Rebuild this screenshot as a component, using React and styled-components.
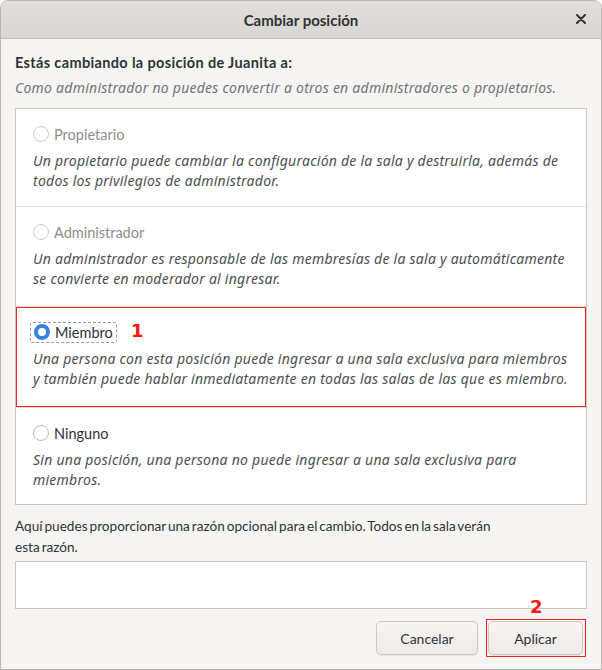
import React from "react";
import styled, { createGlobalStyle } from "styled-components";

const Global = createGlobalStyle`
  html, body { margin: 0; padding: 0; background: #ffffff; }
  body { font-family: "Lato", "Noto Sans", sans-serif; }
  * { box-sizing: border-box; }
`;

const Window = styled.div`
  width: 602px;
  height: 670px;
  background: #f6f5f4;
  border: 1px solid #b9b6b2;
  border-top-left-radius: 8px;
  border-top-right-radius: 8px;
  overflow: hidden;
  display: flex;
  flex-direction: column;
  color: #2e3436;
  font-size: 14.5px;
`;

const HeaderBar = styled.div`
  height: 38px;
  flex: none;
  display: flex;
  align-items: center;
  justify-content: center;
  position: relative;
  background: linear-gradient(#e1dedb, #dad6d2);
  border-bottom: 1px solid #c0bbb6;
`;

const Title = styled.div`
  font-weight: bold;
  font-size: 15px;
  color: #2e3436;
`;

const CloseButton = styled.div`
  position: absolute;
  right: 14px;
  top: 12px;
  width: 12px;
  height: 12px;
  display: flex;
  align-items: center;
  justify-content: center;
`;

const Body = styled.div`
  flex: 1;
  display: flex;
  flex-direction: column;
  padding: 14px 14px 0 14px;
`;

const Heading = styled.div`
  font-weight: bold;
  line-height: 20px;
  letter-spacing: 0.35px;
`;

const Italic = styled.div`
  font-family: "Noto Sans", sans-serif;
  font-style: italic;
  font-size: 14px;
  letter-spacing: 0.25px;
  line-height: 20px;
`;

const Subtitle = styled(Italic)`
  color: #717476;
  margin-top: 5px;
`;

const List = styled.div`
  margin-top: 10px;
  background: #ffffff;
  border: 1px solid #cdc7c2;
  display: flex;
  flex-direction: column;
`;

const Row = styled.div`
  position: relative;
  padding: 14px 11px 14px 17px;
  border-bottom: ${(p) => (p.$last ? "none" : "1px solid #e4e1de")};
  height: ${(p) => p.$h}px;
`;

const Marked = styled.div`
  position: absolute;
  inset: 0;
  border: 1px solid #ff2020;
  pointer-events: none;
`;

const RadioLine = styled.div`
  display: flex;
  align-items: center;
  gap: 5px;
  height: 22px;
  color: ${(p) => (p.$disabled ? "#8b8e8f" : "#2e3436")};
`;

const Focus = styled.div`
  display: flex;
  align-items: center;
  gap: 5px;
  margin-left: -3px;
  padding: 1px 3px;
  border: 1px dashed #9a9a9a;
  border-radius: 3px;
`;

const Radio = styled.span`
  width: 16px;
  height: 16px;
  border-radius: 50%;
  flex: none;
  border: ${(p) =>
    p.$checked ? "4px solid #3584e4" : `1px solid ${p.$disabled ? "#cfcac5" : "#c0bab4"}`};
  background: #ffffff;
`;

const Desc = styled(Italic)`
  color: #4d5052;
  margin-top: 6px;
`;

const Badge = styled.span`
  position: absolute;
  color: #ff1414;
  font-weight: bold;
  font-size: 18px;
  font-family: "DejaVu Sans", sans-serif;
`;

const Reason = styled.div`
  margin-top: 11px;
  max-width: 490px;
  line-height: 21px;
  font-size: 13.6px;
  word-spacing: -1.5px;
`;

const TextBox = styled.div`
  margin-top: 3px;
  height: 48px;
  background: #ffffff;
  border: 1px solid #cdc7c2;
`;

const Actions = styled.div`
  display: flex;
  justify-content: flex-end;
  gap: 10px;
  margin-top: 12px;
  padding-right: 4px;
`;

const Button = styled.div`
  position: relative;
  width: ${(p) => p.$w}px;
  height: 34px;
  display: flex;
  align-items: center;
  justify-content: center;
  border: 1px solid #cdc7c2;
  border-radius: 5px;
  background: linear-gradient(#f6f5f4, #edebe9);
  box-shadow: 0 1px rgba(0, 0, 0, 0.07);
  color: #2e3436;
  font-size: 14px;
`;

const ButtonMark = styled.div`
  position: absolute;
  inset: -3px -4px -3px -3px;
  border: 1px solid #ff2020;
  pointer-events: none;
`;

const roles = [
  {
    name: "Propietario",
    desc: "Un propietario puede cambiar la configuración de la sala y destruirla, además de todos los privilegios de administrador.",
    disabled: true,
    h: 98,
  },
  {
    name: "Administrador",
    desc: "Un administrador es responsable de las membresías de la sala y automáticamente se convierte en moderador al ingresar.",
    disabled: true,
    h: 100,
  },
  {
    name: "Miembro",
    desc: "Una persona con esta posición puede ingresar a una sala exclusiva para miembros y también puede hablar inmediatamente en todas las salas de las que es miembro.",
    checked: true,
    marked: true,
    h: 101,
  },
  {
    name: "Ninguno",
    desc: "Sin una posición, una persona no puede ingresar a una sala exclusiva para miembros.",
    h: 96,
    last: true,
  },
];

export default function App() {
  return (
    <>
      <Global />
      <Window>
        <HeaderBar>
          <Title>Cambiar posición</Title>
          <CloseButton>
            <svg width="10" height="10" viewBox="0 0 10 10">
              <path d="M1 1L9 9M9 1L1 9" stroke="#2e3436" strokeWidth="2" strokeLinecap="round" />
            </svg>
          </CloseButton>
        </HeaderBar>
        <Body>
          <Heading>Estás cambiando la posición de Juanita a:</Heading>
          <Subtitle>
            Como administrador no puedes convertir a otros en administradores o propietarios.
          </Subtitle>
          <List>
            {roles.map((r) => (
              <Row key={r.name} $h={r.h} $last={r.last}>
                {r.marked && <Marked />}
                <RadioLine $disabled={r.disabled}>
                  {r.checked ? (
                    <Focus>
                      <Radio $checked />
                      {r.name}
                    </Focus>
                  ) : (
                    <>
                      <Radio $disabled={r.disabled} />
                      {r.name}
                    </>
                  )}
                  {r.marked && <Badge style={{ left: 115, top: 13 }}>1</Badge>}
                </RadioLine>
                <Desc>{r.desc}</Desc>
              </Row>
            ))}
          </List>
          <Reason>
            Aquí puedes proporcionar una razón opcional para el cambio. Todos en la sala verán
            esta razón.
          </Reason>
          <TextBox />
          <Actions>
            <Button $w={102}>Cancelar</Button>
            <Button $w={95}>
              Aplicar
              <ButtonMark />
              <Badge style={{ left: 41, top: -26 }}>2</Badge>
            </Button>
          </Actions>
        </Body>
      </Window>
    </>
  );
}
